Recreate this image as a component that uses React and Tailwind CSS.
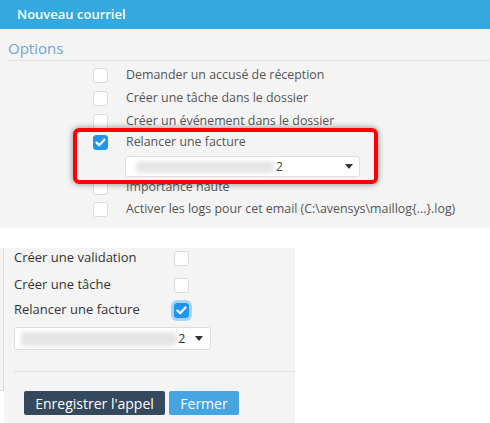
const Box = ({ checked, ring }) => (
  <span
    className={`flex h-[15px] w-[15px] shrink-0 items-center justify-center rounded-[3px] border ${
      checked ? "border-[#1f95ef] bg-[#1f95ef]" : "border-[#dcdcdc] bg-white"
    } ${ring ? "ring-[3px] ring-[#a9d3f7]" : ""}`}
  >
    {checked && (
      <svg width="11" height="9" viewBox="0 0 11 9">
        <path d="M1.5 4.6 L4.2 7.2 L9.5 1.6" fill="none" stroke="white" strokeWidth="2.2" strokeLinecap="round" strokeLinejoin="round" />
      </svg>
    )}
  </span>
);

const Caret = () => (
  <svg width="8" height="5" viewBox="0 0 8 5">
    <path d="M0 0 H8 L4 5 Z" fill="#333" />
  </svg>
);

const Row = ({ label, checked, h }) => (
  <div className={`flex items-center pl-[93px] ${h}`}>
    <Box checked={checked} />
    <span className="ml-[18px] text-[12.4px] text-[#555]">{label}</span>
  </div>
);

export default function App() {
  return (
    <div className="relative h-[423px] w-[490px] overflow-hidden bg-white font-['Open_Sans',sans-serif]">
      {/* top window */}
      <div className="h-[228px] bg-[#f4f4f4]">
        <div className="flex h-[29px] items-center bg-[#36a8e0] pl-[17px] text-[13px] font-semibold text-white">
          Nouveau courriel
        </div>
        <div className="ml-[8px] flex h-[32px] items-end border-b border-[#e2e2e2] text-[15px] leading-[24px] text-[#6fa5d3]">
          Options
        </div>
        <div className="pt-[3px]">
          <Row label="Demander un accusé de réception" h="h-[23px]" />
          <Row label="Créer une tâche dans le dossier" h="h-[23px]" />
          <Row label="Créer un événement dans le dossier" h="h-[23px]" />
          <Row label="Relancer une facture" checked h="h-[19px]" />
          <div className="ml-[125px] mt-[4px] flex h-[21px] w-[235px] items-center rounded-[3px] border border-[#dedede] bg-white pl-[10px] pr-[6px]">
            <span className="h-[12px] w-[138px] rounded bg-[#e6e6e6] blur-[2px]" />
            <span className="ml-[2px] text-[12px] text-[#444]">2</span>
            <span className="ml-auto flex">
              <Caret />
            </span>
          </div>
          <Row label="Importance haute" h="h-[21px]" />
          <Row label="Activer les logs pour cet email (C:\avensys\maillog{...}.log)" h="h-[23px]" />
        </div>
      </div>

      {/* bottom window */}
      <div className="mt-[20px] flex h-[175px]">
        <div className="w-[4px]">
          <div className="h-[143px] border-b border-r border-[#dcdcdc] bg-[#f4f4f4]" />
        </div>
        <div className="w-[291px] bg-[#f4f4f4] pl-[10px] text-[13px] text-[#333]">
          <div className="mt-[2px] flex h-[16px] items-center">
            <span className="w-[160px]">Créer une validation</span>
            <Box />
          </div>
          <div className="mt-[11px] flex h-[16px] items-center">
            <span className="w-[160px]">Créer une tâche</span>
            <Box />
          </div>
          <div className="mt-[9px] flex h-[16px] items-center">
            <span className="w-[160px]">Relancer une facture</span>
            <Box checked ring />
          </div>
          <div className="mt-[9px] flex h-[23px] w-[197px] items-center rounded-[3px] border border-[#dcdcdc] bg-white pl-[6px] pr-[7px]">
            <span className="h-[14px] w-[156px] rounded bg-[#e4e4e4] blur-[2px]" />
            <span className="ml-[1px] text-[13px] text-[#333]">2</span>
            <span className="ml-auto flex">
              <Caret />
            </span>
          </div>
          <div className="mt-[21px] border-t border-[#e0e0e0]" />
          <div className="ml-[10px] mt-[19px] flex gap-[4px]">
            <button className="flex h-[24px] w-[141px] items-center justify-center rounded-[2px] bg-[#34495e] text-[14px] text-white">
              Enregistrer l'appel
            </button>
            <button className="flex h-[24px] w-[70px] items-center justify-center rounded-[2px] bg-[#45a4e2] text-[14px] text-white">
              Fermer
            </button>
          </div>
        </div>
      </div>

      {/* red highlight */}
      <div className="absolute left-[73px] top-[128px] h-[56px] w-[305px] rounded-[6px] border-[4px] border-[#ff0000] shadow-[0_0_6px_rgba(0,0,0,0.45)]" />
    </div>
  );
}
